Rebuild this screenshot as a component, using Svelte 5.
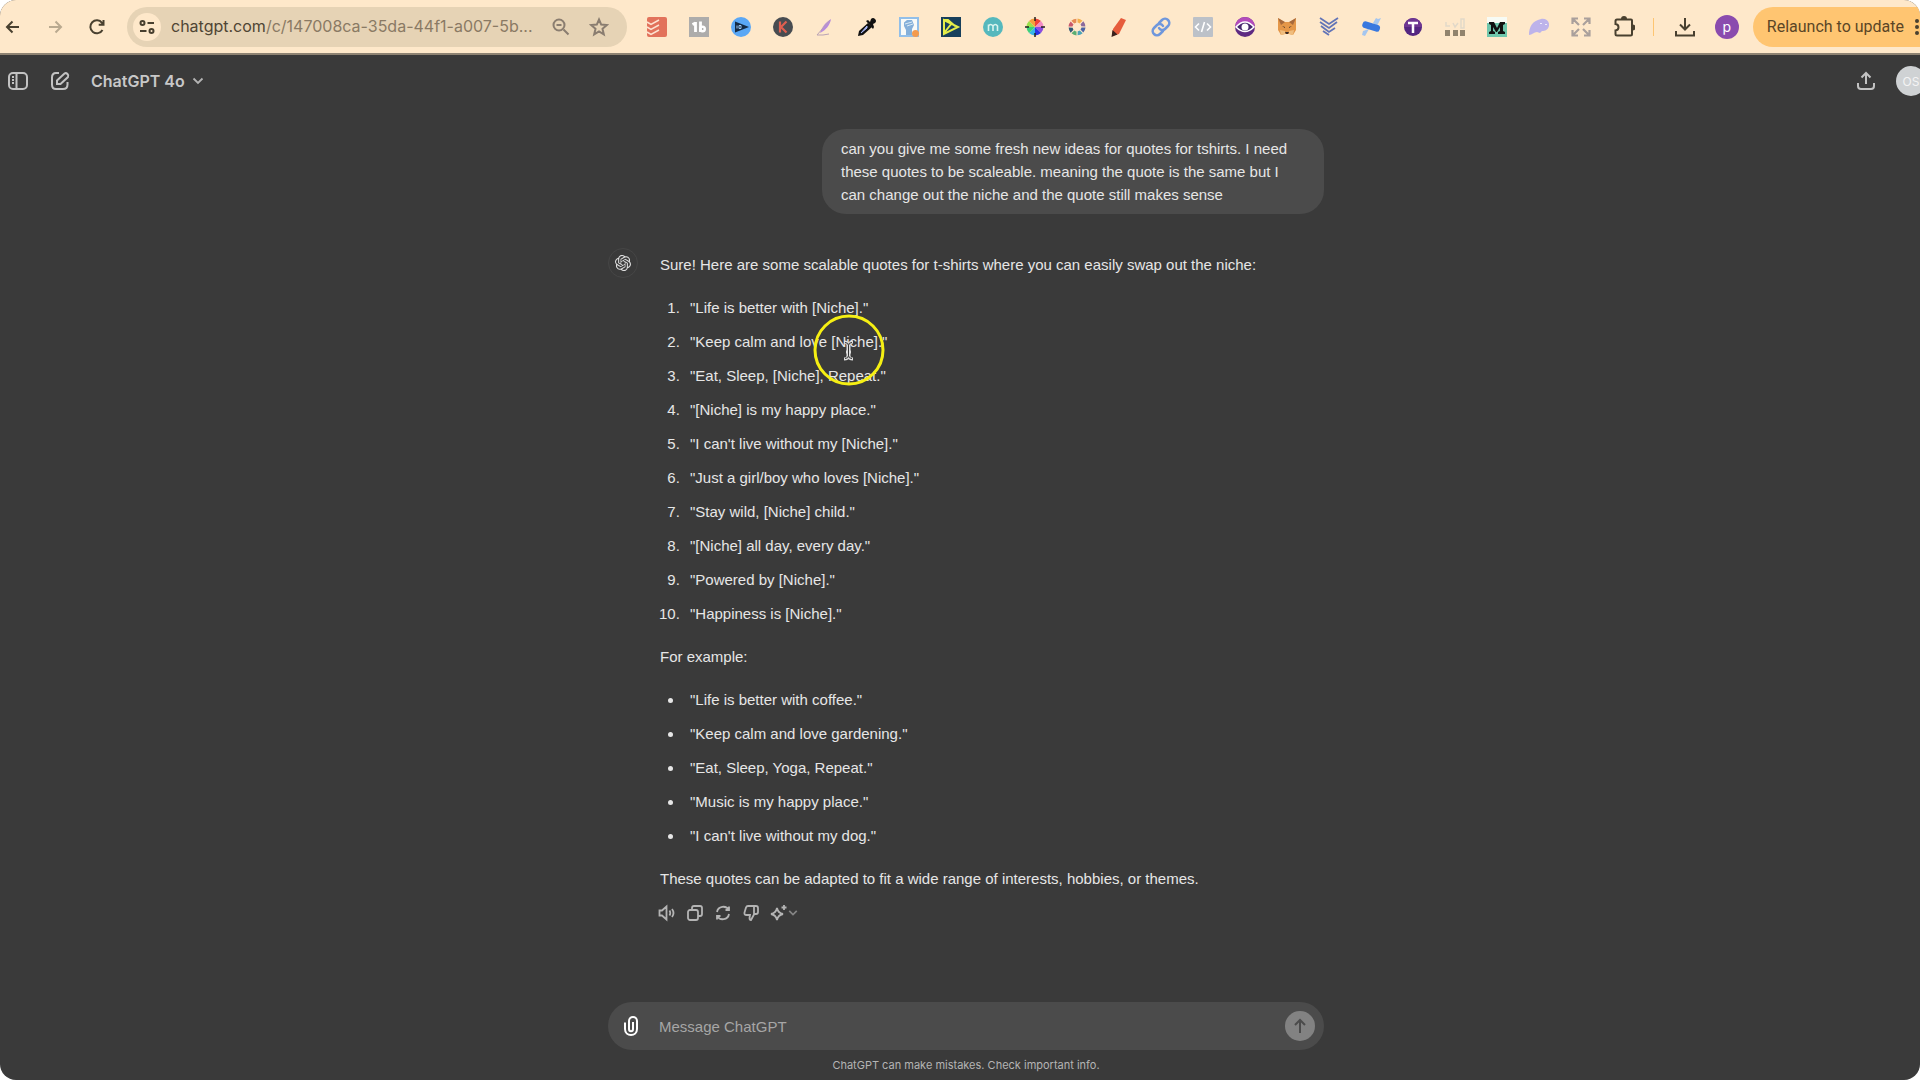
<script>
	/** @type {string[]} */
	const templates = [
		'"Life is better with [Niche]."',
		'"Keep calm and love [Niche]."',
		'"Eat, Sleep, [Niche], Repeat."',
		'"[Niche] is my happy place."',
		'"I can\'t live without my [Niche]."',
		'"Just a girl/boy who loves [Niche]."',
		'"Stay wild, [Niche] child."',
		'"[Niche] all day, every day."',
		'"Powered by [Niche]."',
		'"Happiness is [Niche]."'
	];
	const examples = [
		'"Life is better with coffee."',
		'"Keep calm and love gardening."',
		'"Eat, Sleep, Yoga, Repeat."',
		'"Music is my happy place."',
		'"I can\'t live without my dog."'
	];
	const extensions = [
		'todoist', 'tb', 'player', 'keywords', 'feather', 'eyedropper', 'fist', 'ds', 'm-circle',
		'wheel', 'ring', 'marker', 'link', 'code', 'eye', 'fox', 'stripes', 'pin', 't-circle',
		'bars', 'm-square', 'blob', 'expand'
	];
	let message = '';
	const wheel = ['#f04438', '#f28ac5', '#8c4be0', '#2932e6', '#36b6e8', '#3bd07a', '#9be04a', '#f4a13c'];
	const ring = ['#f3b04e', '#8b6a9c', '#4c63a5', '#4aa3b8', '#59ad72', '#2f5878', '#c8596c', '#e58b53'];
</script>

<div class="window">
	<header class="toolbar">
		<nav class="nav" aria-label="Navigation">
			<button aria-label="Back">
				<svg width="20" height="20" viewBox="0 0 20 20" class="line dark"><path d="M16 10H4M9.500 4.500 4 10l5.500 5.500" /></svg>
			</button>
			<button aria-label="Forward">
				<svg width="20" height="20" viewBox="0 0 20 20" class="line faded"><path d="M4 10h12M10.500 4.500 16 10l-5.500 5.500" /></svg>
			</button>
			<button aria-label="Reload">
				<svg width="20" height="20" viewBox="0 0 20 20" class="line dark"><path d="M15.500 13A6.500 6.500 0 1 1 15 5.800L16.500 7.500M16.500 3v4.800h-4.800" /></svg>
			</button>
		</nav>
		<div class="address">
			<button class="site" aria-label="Site information">
				<svg width="18" height="18" viewBox="0 0 18 18" class="line dark"><circle cx="4.500" cy="5" r="2" /><path d="M9.500 5H16M2 13h6.500" /><circle cx="13.500" cy="13" r="2" /></svg>
			</button>
			<a class="url" href="#top"><b>chatgpt.com</b>/c/147008ca-35da-44f1-a007-5b...</a>
			<button aria-label="Zoom">
				<svg width="20" height="20" viewBox="0 0 20 20" class="line mid"><circle cx="8" cy="8" r="5.500" /><path d="m12.500 12.500 5 5M5.500 8h5" /></svg>
			</button>
			<button aria-label="Bookmark">
				<svg width="20" height="20" viewBox="0 0 20 20" class="line mid"><path d="m10 2.500 2.200 5.100 5.500.500-4.200 3.700 1.300 5.500-4.800-2.900-4.800 2.900 1.300-5.500-4.200-3.700 5.500-.500z" /></svg>
			</button>
		</div>
		<div class="extensions">
			{#each extensions as name}
				<button aria-label={name}>
					<svg width="20" height="20" viewBox="0 0 20 20" fill="none">
						{#if name === 'todoist'}
							<rect x="0" y="0" width="20" height="20" rx="2" fill="#e2725b" />
							<path d="m0 5 4 2.500L12 3M0 10l4 2.500L12 8M0 15l4 2.500 8-4.500" stroke="#fde4d2" stroke-width="1.500" />
						{:else if name === 'tb'}
							<rect width="20" height="20" fill="#adacab" />
							<path d="M6.500 5v10M3.500 7.500 6.500 6M11.500 4.500V15" stroke="#fff" stroke-width="2.800" /><circle cx="13.500" cy="12" r="2.300" stroke="#fff" stroke-width="2.400" />
						{:else if name === 'player'}
							<circle cx="10" cy="10" r="10" fill="#5aa7f5" /><path d="M4 4.500 18 10 4 15.500z" fill="#142a44" /><path d="M6 8.500v3M8 8.500h2v3H8z" stroke="#9cc8f4" />
						{:else if name === 'keywords'}
							<circle cx="10" cy="10" r="10" fill="#484c51" /><path d="M7 4.500v11M13.500 4.500 8 10l5.500 5.500" stroke="#df5f50" stroke-width="2.200" />
						{:else if name === 'feather'}
							<path d="M16 2c-1 6-5 11-11 14C7 10 10 6 16 2z" fill="#b78add" /><path d="M15 3 2 18h6l6-1" stroke="#b9a2b4" stroke-width="1" />
						{:else if name === 'eyedropper'}
							<path d="m11 6 4 4-9 8-5 1 1-5z" fill="#111" /><path d="m10 9-6 7 6-5z" fill="#aab8f6" stroke="#aab8f6" /><path d="m9 4 2-1 2 2 1-3q2-2 4 0t0 4l-2 1 1 3-1 2z" fill="#111" />
						{:else if name === 'fist'}
							<rect x="1" y="1" width="18" height="18" fill="#f8faf8" stroke="#92bfe9" stroke-width="2" />
							<path d="M5 5.500 8 3l5 0 2 5-2 4v6H7v-5L5 9z" fill="#84afd9" /><path d="m6 7 7-2m-5 4 6-2" stroke="#d9eaf5" /><circle cx="16.500" cy="16.500" r="3.500" fill="#f39a4e" />
						{:else if name === 'ds'}
							<rect width="20" height="20" fill="#173f5c" /><path d="M3 3v14l14-7zM3 3h4l7 6M3 16l8-10" stroke="#e4ee4a" stroke-width="2" />
						{:else if name === 'm-circle'}
							<circle cx="10" cy="10" r="10" fill="#55b8bd" /><path d="M5.500 14V7.500M5.500 9q2-3 4.500 0v5m0-5q2.500-3 4.500 0v5" stroke="#d8f4ee" stroke-width="1.600" />
						{:else if name === 'wheel'}
							{#each wheel as color, i}
								<path d="M10 10V1.500A8.500 8.500 0 0 1 16 4z" fill={color} transform={`rotate(${i * 45} 10 10)`} />
							{/each}
							<path d="M10 0v4M10 16v4M0 10h4M16 10h4" stroke="#222" stroke-width="1.500" />
						{:else if name === 'ring'}
							{#each ring as color, i}
								<path d="M10.500 1.500A8.500 8.500 0 0 1 15.500 3.700L12.500 6.500A4.500 4.500 0 0 0 10.500 5.500z" fill={color} transform={`rotate(${i * 45} 10 10)`} />
							{/each}
						{:else if name === 'marker'}
							<path d="m12 1 5 2-7 14-7 2 1-7z" fill="#e65c3c" /><path d="m3.500 13 5 4.500L2.500 20z" fill="#3a211d" />
						{:else if name === 'link'}
							<g stroke="#6f97dc" stroke-width="2.500" stroke-linecap="round"><path d="m8 6 3-3c4-4 10 2 6 6l-3 3c-2 2-5 1-6-1" /><path d="m12 14-3 3c-4 4-10-2-6-6l3-3c2-2 5-1 6 1" /></g>
						{:else if name === 'code'}
							<rect width="20" height="20" rx="1" fill="#bcc1c8" /><path d="M6 6.500 2.500 10 6 13.500M14 6.500l3.500 3.500-3.500 3.500M11.500 5l-3 10" stroke="#fff" stroke-width="1.600" />
						{:else if name === 'eye'}
							<circle cx="10" cy="10" r="10" fill="#5e2a82" /><path d="M0 10a10 10 0 0 1 20 0z" fill="#b34bbb" /><path d="M1 10q9-10 18 0-9 9-18 0z" fill="#44266c" stroke="#fff" stroke-width="1.500" /><circle cx="10" cy="10" r="3.500" fill="#fff" />
						{:else if name === 'fox'}
							<path d="m1 1 6 4h6l6-4v12l-3 5-4-1H8l-4 1-3-5z" fill="#e49749" /><path d="m1 1 3 7 4-3zM19 1l-3 7-4-3z" fill="#a7693b" /><path d="m3 13 5 1v3l-4 1zM17 13l-5 1v3l4 1z" fill="#efbd7e" /><path d="m5 9 3 1v1zM15 9l-3 1v1zM8 15h4l-1 2H9z" fill="#3b2c27" />
						{:else if name === 'stripes'}
							<path d="m1 1 9 6 9-6M1 5l9 6 8-6M2 9l8 6 6-4M4 14l6 4" stroke="#6274b7" stroke-width="1.800" />
						{:else if name === 'pin'}
							<path d="m12 6 3-5 2 1 3-1-4 8zM8 12l-4 7-3-1 1-4z" fill="#a5c6ef" /><rect x="1" y="6" width="18" height="7" rx="3" fill="#3878df" transform="rotate(17 10 10)" />
						{:else if name === 't-circle'}
							<circle cx="10" cy="10" r="9" fill="#542681" /><path d="M1 10a9 9 0 0 1 18 0z" fill="#6e3692" /><path d="M5 6h10M10 6v10" stroke="#fff" stroke-width="2.500" />
						{:else if name === 'bars'}
							<path d="M0 13h5v6H0zM8 13h5v6H8zM15 13h5v6h-5z" fill="#91836d" /><path d="M1 5v4h4M8 6l2 4 3-4M16 2h3v9h-3z" stroke="#e2d9c9" stroke-width="1.500" />
						{:else if name === 'm-square'}
							<rect width="20" height="20" fill="#f7fbf5" /><rect y="6" width="20" height="14" fill="#6fc7ac" /><path d="M2 5h5l3 6 3-6h5v2l-2 1v6l2 1v2h-7v-2l2-1v-4l-3 5H9L6 10v4l2 1v2H2v-2l2-1V8L2 7z" fill="#111" />
						{:else if name === 'blob'}
							<path d="M0 18c0-8 3-14 12-16 5-1 9 3 8 7-1 4-4 5-7 5l-2 2-3-1c-3 0-5 3-8 3z" fill="#bdb3ea" /><path d="M12 6v1M17 7v1" stroke="#fff" stroke-width="1.500" />
						{:else}
							<g stroke="#aaa09c" stroke-width="2.200"><path d="M1.500 7V1.500H7M1.500 1.500 8 8M13 1.500h5.500V7M18.500 1.500 12 8M1.500 13v5.500H7M1.500 18.500 8 12M13 18.500h5.500V13M18.500 18.500 12 12" /></g>
						{/if}
					</svg>
				</button>
			{/each}
			<button aria-label="Extensions">
				<svg width="22" height="22" viewBox="0 0 22 22" class="line dark"><path d="M4 3.500h14q1 0 1 1V18q0 1.500-1.500 1.500H4Q2.500 19.500 2.500 18v-3.500c4-.500 4-6 0-6.500V5Q2.500 3.500 4 3.500z" /><path d="M8 3a3 3 0 0 1 6 0zM19.500 8.500a3 3 0 0 1 0 6z" fill="#49402f" stroke="none" /></svg>
			</button>
		</div>
		<span class="divider"></span>
		<button class="download" aria-label="Downloads">
			<svg width="22" height="22" viewBox="0 0 22 22" class="line dark"><path d="M11 2v11M6 8.500l5 5 5-5M2 15v4.500h18V15" /></svg>
		</button>
		<button class="profile">p</button>
		<button class="relaunch">
			Relaunch to update
			<svg width="6" height="20" viewBox="0 0 6 20" fill="#49402f"><circle cx="3" cy="4" r="2" /><circle cx="3" cy="10" r="2" /><circle cx="3" cy="16" r="2" /></svg>
		</button>
	</header>

	<main class="app" id="top">
		<div class="topbar">
			<button aria-label="Open sidebar">
				<svg width="22" height="22" viewBox="0 0 22 22" class="line light"><rect x="2" y="3" width="18" height="16" rx="4" /><path d="M9.500 3v16M5 7h2M5 10h2M5 13h2" /></svg>
			</button>
			<button aria-label="New chat">
				<svg width="22" height="22" viewBox="0 0 22 22" class="line light"><path d="M10 3H7Q3 3 3 7.500v7q0 4.500 4 4.500h7q4.500 0 4.500-4.500V12M8 14v-3.500L15.500 3.500q1.500-1 3 .500t.500 3L11.500 14z" /></svg>
			</button>
			<button class="model">
				ChatGPT 4o
				<svg width="12" height="12" viewBox="0 0 12 12" class="line soft"><path d="m1.500 3.500 4.500 4.500 4.500-4.500" /></svg>
			</button>
			<button class="share" aria-label="Share">
				<svg width="20" height="20" viewBox="0 0 20 20" class="line light"><path d="M10 13V2.500M5.500 6.500 10 2l4.500 4.500M2 12v3q0 3 3 3h10q3 0 3-3v-3" /></svg>
			</button>
			<button class="account">OS</button>
		</div>

		<section class="thread">
			<p class="prompt">can you give me some fresh new ideas for quotes for tshirts. I need these quotes to be scaleable. meaning the quote is the same but I can change out the niche and the quote still makes sense</p>
			<article class="reply">
				<div class="avatar">
					<svg width="16" height="16" viewBox="0 0 24 24" fill="#e0e0e0"><path d="M22.2819 9.8211a5.9847 5.9847 0 0 0-.5157-4.9108 6.0462 6.0462 0 0 0-6.5098-2.9A6.0651 6.0651 0 0 0 4.9807 4.1818a5.9847 5.9847 0 0 0-3.9977 2.9 6.0462 6.0462 0 0 0 .7427 7.0966 5.98 5.98 0 0 0 .511 4.9107 6.051 6.051 0 0 0 6.5146 2.9001A5.9847 5.9847 0 0 0 13.2599 24a6.0557 6.0557 0 0 0 5.7718-4.2058 5.9894 5.9894 0 0 0 3.9977-2.9001 6.0557 6.0557 0 0 0-.7475-7.0729zm-9.022 12.6081a4.4755 4.4755 0 0 1-2.8764-1.0408l.1419-.0804 4.7783-2.7582a.7948.7948 0 0 0 .3927-.6813v-6.7369l2.02 1.1686a.071.071 0 0 1 .038.052v5.5826a4.504 4.504 0 0 1-4.4945 4.4944zm-9.6607-4.1254a4.4708 4.4708 0 0 1-.5346-3.0137l.142.0852 4.783 2.7582a.7712.7712 0 0 0 .7806 0l5.8428-3.3685v2.3324a.0804.0804 0 0 1-.0332.0615L9.74 19.9502a4.4992 4.4992 0 0 1-6.1408-1.6464zM2.3408 7.8956a4.485 4.485 0 0 1 2.3655-1.9728V11.6a.7664.7664 0 0 0 .3879.6765l5.8144 3.3543-2.0201 1.1685a.0757.0757 0 0 1-.071 0l-4.8303-2.7865A4.504 4.504 0 0 1 2.3408 7.872zm16.5963 3.8558L13.1038 8.364 15.1192 7.2a.0757.0757 0 0 1 .071 0l4.8303 2.7913a4.4944 4.4944 0 0 1-.6765 8.1042v-5.6772a.79.79 0 0 0-.407-.667zm2.0107-3.0231l-.142-.0852-4.7735-2.7818a.7759.7759 0 0 0-.7854 0L9.409 9.2297V6.8974a.0662.0662 0 0 1 .0284-.0615l4.8303-2.7866a4.4992 4.4992 0 0 1 6.6802 4.66zM8.3065 12.863l-2.02-1.1638a.0804.0804 0 0 1-.038-.0567V6.0742a4.4992 4.4992 0 0 1 7.3757-3.4537l-.142.0805L8.704 5.459a.7948.7948 0 0 0-.3927.6813zm1.0976-2.3654l2.602-1.4998 2.6069 1.4998v2.9994l-2.5974 1.4997-2.6067-1.4997Z" /></svg>
				</div>
				<div class="content">
					<div class="markdown">
						<p>Sure! Here are some scalable quotes for t-shirts where you can easily swap out the niche:</p>
						<ol>
							{#each templates as text}
								<li>{text}</li>
							{/each}
						</ol>
						<p>For example:</p>
						<ul>
							{#each examples as text}
								<li>{text}</li>
							{/each}
						</ul>
						<p>These quotes can be adapted to fit a wide range of interests, hobbies, or themes.</p>
					</div>
					<div class="actions">
						<button aria-label="Read aloud">
							<svg width="18" height="18" viewBox="0 0 18 18" class="line soft"><path d="M1.500 6.500H4L8.500 2.500v13L4 11.500H1.500zM11.500 6.500q1.500 2.500 0 5M14 5q3 4 0 8" /></svg>
						</button>
						<button aria-label="Copy">
							<svg width="18" height="18" viewBox="0 0 18 18" class="line soft"><rect x="2" y="6" width="10" height="10" rx="2" /><path d="M6 6V4q0-2 2-2h6q2 0 2 2v6q0 2-2 2h-2" /></svg>
						</button>
						<button aria-label="Regenerate">
							<svg width="18" height="18" viewBox="0 0 18 18" class="line soft"><path d="M3 8c1-6 9-7 12-2M15 2.500V6h-3.500M15 10c-1 6-9 7-12 2M3 15.500V12h3.500" /></svg>
						</button>
						<button aria-label="Bad response">
							<svg width="18" height="18" viewBox="0 0 18 18" class="line soft"><path d="M12 2H6Q4.500 2 4 3.500L2.500 8.500Q2 11 4.500 11H8l-.500 3q0 2 1.500 2L12 10.500zM12 2h2q2 0 2 2v4q0 2-2 2h-2" /></svg>
						</button>
						<button class="switch" aria-label="Change model">
							<svg width="18" height="18" viewBox="0 0 18 18" class="line soft"><path d="M7 4q1 5 6 6-5 1-6 6-1-5-6-6 5-1 6-6zM14 1v5M11.500 3.500h5" /></svg>
							<svg width="10" height="10" viewBox="0 0 12 12" class="line dim"><path d="m1.500 3.500 4.500 4.500 4.500-4.500" /></svg>
						</button>
					</div>
				</div>
			</article>
		</section>

		<footer class="bottom">
			<form class="composer">
				<button type="button" aria-label="Attach file">
					<svg width="20" height="22" viewBox="0 0 20 22" class="line white"><path d="M4 7.500V14c0 8 12 8 12 0V6c0-5.500-8-5.500-8 0v8c0 3 4 3 4 0V7" /></svg>
				</button>
				<input aria-label="Message" placeholder="Message ChatGPT" bind:value={message} />
				<button type="button" class="send" aria-label="Send">
					<svg width="18" height="18" viewBox="0 0 18 18" class="line"><path d="M9 16V3M4 8l5-5 5 5" /></svg>
				</button>
			</form>
			<small>ChatGPT can make mistakes. Check important info.</small>
		</footer>
	</main>

	<svg class="pointer" width="72" height="72" viewBox="0 0 72 72" fill="none">
		<circle cx="36" cy="36" r="34" stroke="#f5ef13" stroke-width="3" />
		<path d="M31 28q4 0 4 3v11q0 3-4 3M40 28q-4 0-4 3v11q0 3 4 3M33 38h5" stroke="#ddd" stroke-width="3" />
		<path d="M32 28.500q3.500 0 3.500 3v10q0 3-3.500 3M39 28.500q-3.500 0-3.500 3v10q0 3 3.500 3" stroke="#333" />
	</svg>
</div>

<style>
	:global(body) {
		margin: 0;
		background: #fff;
	}
	.window {
		position: relative;
		display: flex;
		flex-direction: column;
		min-height: 100vh;
		overflow: hidden;
		border-radius: 16px;
		background: #3a3a3a;
		font-family: 'Liberation Sans', Arial, sans-serif;
		font-size: 15px;
		line-height: 23px;
		color: #e6e6e6;
	}
	button {
		display: flex;
		align-items: center;
		justify-content: center;
		flex: none;
		padding: 0;
		border: 0;
		background: none;
		color: inherit;
		font: inherit;
	}
	svg {
		display: block;
		flex: none;
	}
	.line {
		fill: none;
		stroke: currentColor;
		stroke-width: 2;
	}
	.dark {
		color: #49402f;
	}
	.faded {
		color: #b9a98f;
	}
	.mid {
		color: #8a7d70;
	}
	.light {
		color: #c2c2c2;
	}
	.soft {
		color: #b4b4b4;
		stroke-width: 1.8;
	}
	.dim {
		color: #858585;
	}
	.white {
		color: #fff;
	}

	.toolbar {
		display: flex;
		align-items: center;
		height: 55px;
		border-bottom: 2px solid #8e8373;
		box-sizing: border-box;
		background: #fee8ca;
		font-family: Inter, sans-serif;
	}
	.nav {
		display: flex;
		gap: 22px;
		padding: 0 20px 0 3px;
	}
	.address {
		display: flex;
		align-items: center;
		gap: 18px;
		width: 500px;
		height: 40px;
		box-sizing: border-box;
		padding: 0 18px 0 6px;
		border-radius: 20px;
		background: #e6d3b5;
	}
	.site {
		width: 28px;
		height: 28px;
		border-radius: 50%;
		background: #fee8ca;
	}
	.url {
		flex: 1;
		margin-left: -8px;
		white-space: nowrap;
		text-decoration: none;
		font-size: 16px;
		color: #8a7a64;

		& b {
			font-weight: 400;
			color: #4f4534;
		}
	}
	.extensions {
		display: flex;
		align-items: center;
		gap: 22px;
		margin-left: 20px;
	}
	.divider {
		width: 3px;
		height: 18px;
		margin: 0 20px 0 18px;
		background: #fdc572;
	}
	.profile {
		width: 24px;
		height: 24px;
		margin: 0 14px 0 19px;
		border-radius: 50%;
		background: #8a4bae;
		color: #fff;
		font-size: 14px;
	}
	.relaunch {
		flex: 1;
		justify-content: flex-start;
		gap: 10px;
		height: 40px;
		padding-left: 14px;
		border-radius: 20px 0 0 20px;
		background: #ffc571;
		color: #5b4526;
		font-family: Roboto, sans-serif;
		font-size: 16px;
		white-space: nowrap;
	}

	.app {
		display: flex;
		flex: 1;
		flex-direction: column;
	}
	.topbar {
		display: flex;
		align-items: center;
		gap: 20px;
		height: 52px;
		padding-left: 7px;
		font-family: Inter, sans-serif;
	}
	.model {
		gap: 7px;
		font-size: 16px;
		font-weight: 600;
		color: #c8c8c8;
	}
	.share {
		margin-left: auto;
	}
	.account {
		width: 30px;
		height: 30px;
		margin-right: -6px;
		border-radius: 50%;
		background: #cfd2d4;
		color: #f4f4f4;
		font-size: 12px;
	}
	.thread,
	.bottom {
		width: 716px;
		margin-left: 608px;
	}
	.thread {
		display: flex;
		flex: 1;
		flex-direction: column;
		gap: 34px;
		padding-top: 22px;
	}
	p,
	ol,
	ul {
		margin: 0;
	}
	.prompt {
		align-self: flex-end;
		width: 464px;
		padding: 8px 19px;
		border-radius: 24px;
		background: #4b4b4b;
	}
	.reply {
		display: flex;
		gap: 22px;
	}
	.avatar {
		display: flex;
		align-items: center;
		justify-content: center;
		width: 28px;
		height: 28px;
		border: 1px solid #464646;
		border-radius: 50%;
	}
	.content {
		display: flex;
		flex: 1;
		flex-direction: column;
		gap: 14px;
		padding-top: 5px;
	}
	.markdown {
		display: flex;
		flex-direction: column;
		gap: 20px;
	}
	ol,
	ul {
		display: flex;
		flex-direction: column;
		gap: 11px;
		padding-left: 24px;
	}
	li {
		padding-left: 6px;
	}
	.actions {
		display: flex;
		gap: 10px;
		margin-left: -2px;
	}
	.bottom {
		display: flex;
		flex-direction: column;
		align-items: center;
		gap: 6px;
		padding-bottom: 6px;
	}
	.composer {
		display: flex;
		align-items: center;
		gap: 18px;
		width: 100%;
		height: 48px;
		box-sizing: border-box;
		padding: 0 9px 0 13px;
		border-radius: 24px;
		background: #4b4b4b;
	}
	input {
		flex: 1;
		min-width: 0;
		padding: 0;
		border: 0;
		outline: 0;
		background: none;
		color: inherit;
		font: inherit;
	}
	input::placeholder {
		color: #a6a6a6;
		opacity: 1;
	}
	.send {
		width: 30px;
		height: 30px;
		border-radius: 50%;
		background: #828282;
		color: #4b4b4b;
	}
	small {
		font-family: Inter, sans-serif;
		font-size: 11px;
		line-height: 18px;
		color: #b4b4b4;
	}
	.pointer {
		position: absolute;
		top: 314px;
		left: 813px;
		pointer-events: none;
	}
</style>
